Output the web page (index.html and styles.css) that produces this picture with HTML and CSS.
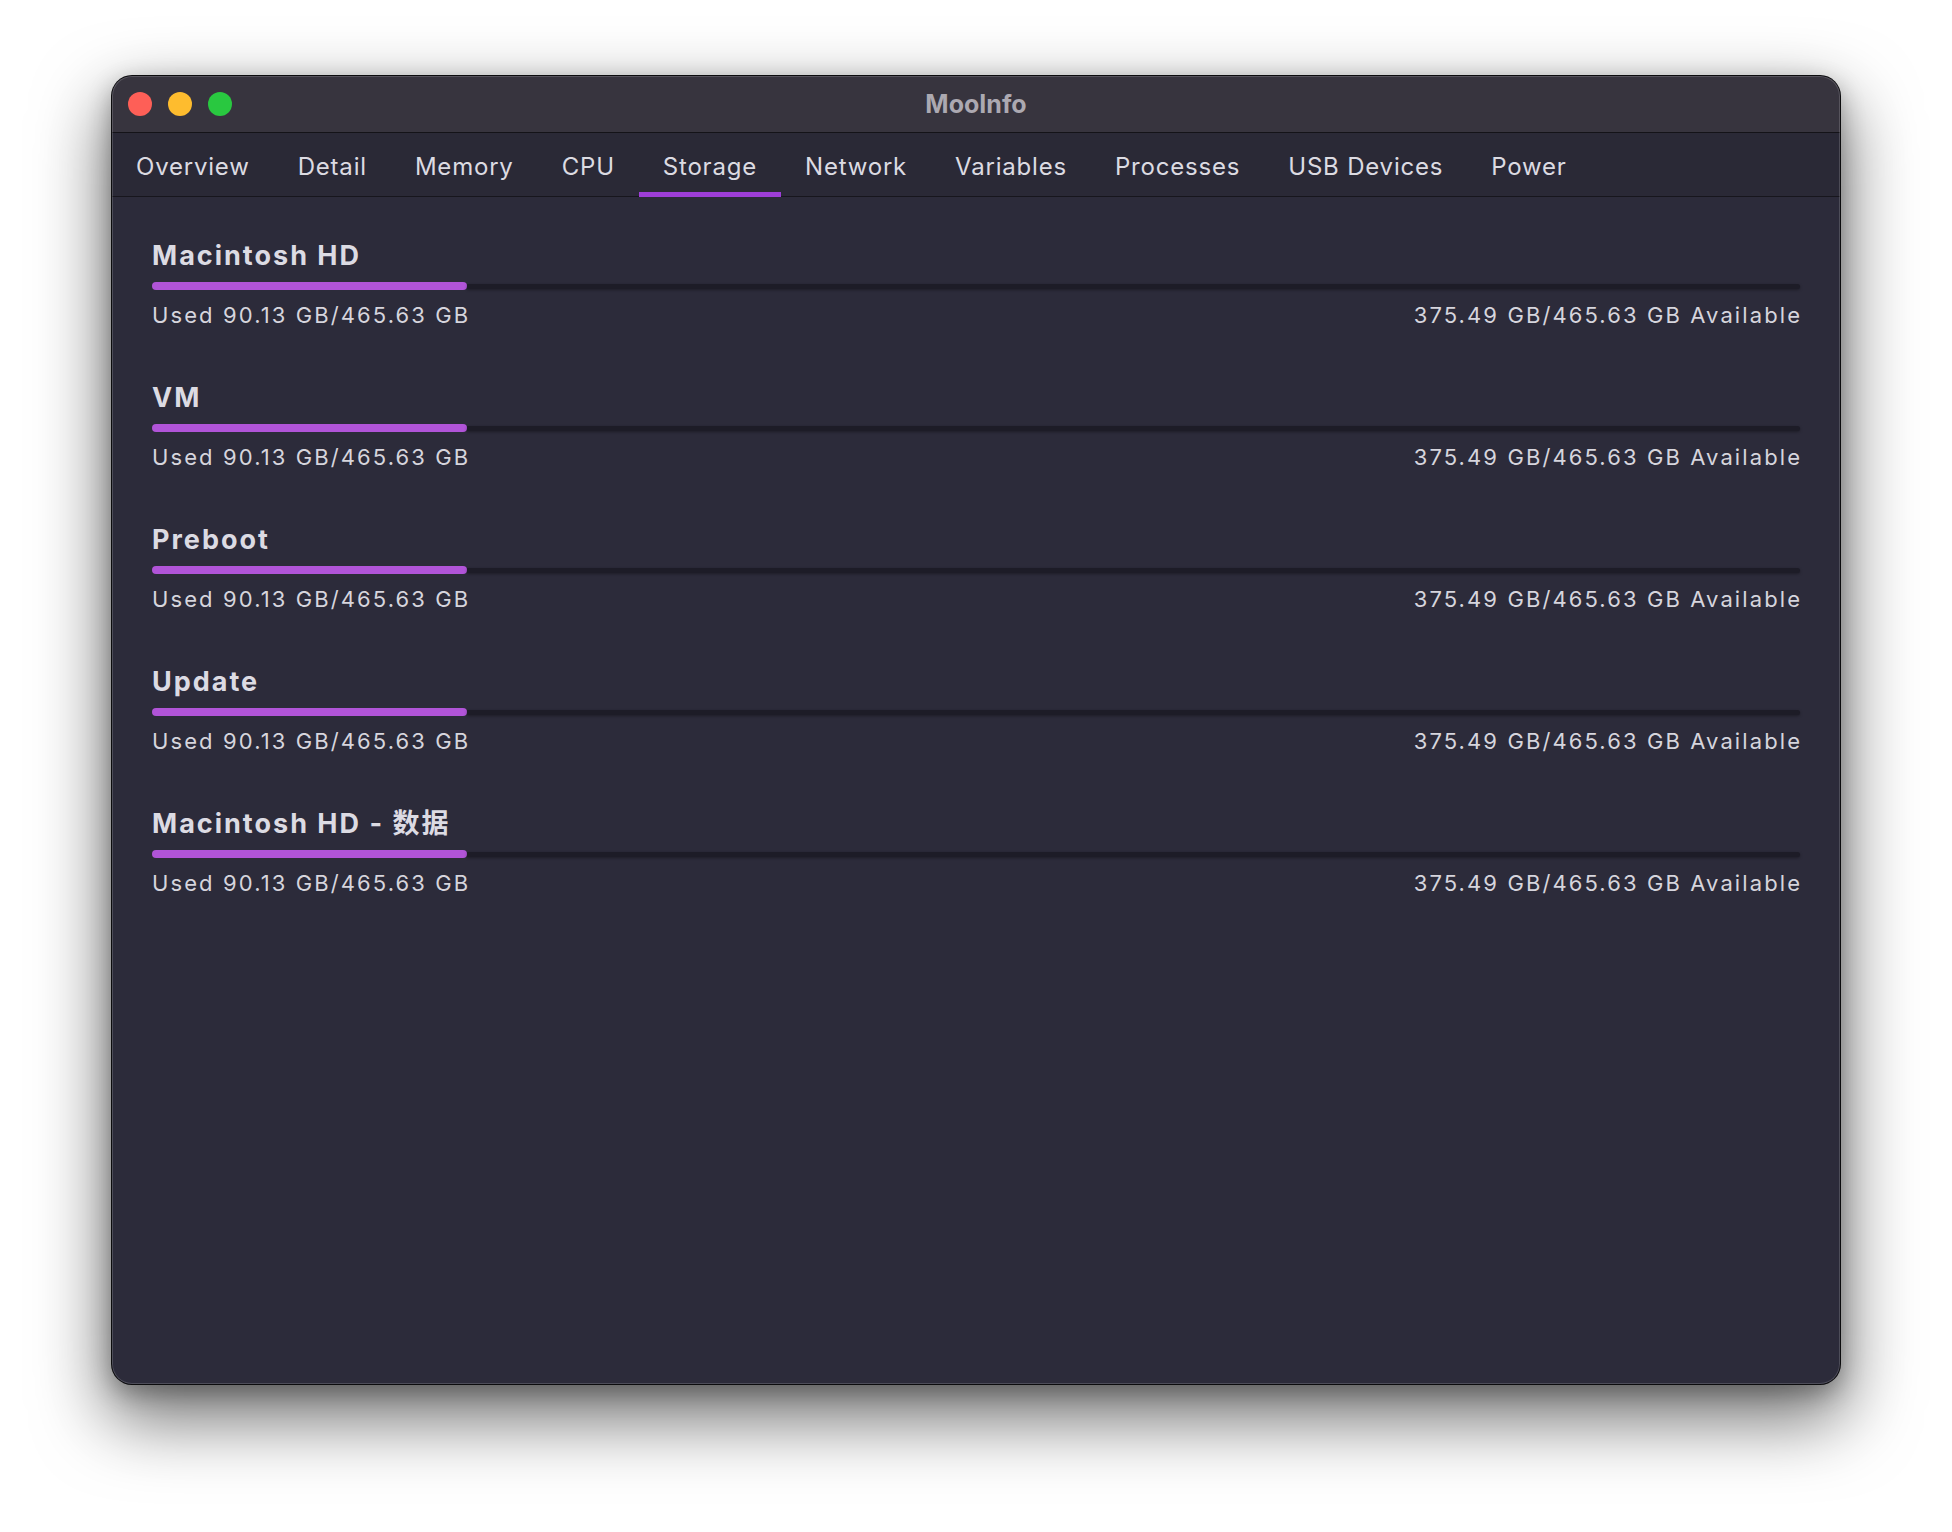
FILE: index.html
```html
<!DOCTYPE html>
<html lang="en">
<head>
<meta charset="utf-8">
<title>MooInfo</title>
<link rel="stylesheet" href="styles.css">
</head>
<body>
<div class="window">
  <header class="titlebar">
    <div class="lights">
      <span class="light red"></span>
      <span class="light yellow"></span>
      <span class="light green"></span>
    </div>
    <div class="title">MooInfo</div>
  </header>
  <nav class="tabs">
    <div class="tab">Overview</div>
    <div class="tab">Detail</div>
    <div class="tab">Memory</div>
    <div class="tab">CPU</div>
    <div class="tab active">Storage</div>
    <div class="tab">Network</div>
    <div class="tab">Variables</div>
    <div class="tab">Processes</div>
    <div class="tab">USB Devices</div>
    <div class="tab">Power</div>
  </nav>
  <main class="content">
    <section class="disk">
      <div class="disk-name">Macintosh HD</div>
      <div class="bar"><div class="fill" style="width:19.1%"></div><div class="track"></div></div>
      <div class="disk-info"><span>Used 90.13 GB/465.63 GB</span><span>375.49 GB/465.63 GB Available</span></div>
    </section>
    <section class="disk">
      <div class="disk-name">VM</div>
      <div class="bar"><div class="fill" style="width:19.1%"></div><div class="track"></div></div>
      <div class="disk-info"><span>Used 90.13 GB/465.63 GB</span><span>375.49 GB/465.63 GB Available</span></div>
    </section>
    <section class="disk">
      <div class="disk-name">Preboot</div>
      <div class="bar"><div class="fill" style="width:19.1%"></div><div class="track"></div></div>
      <div class="disk-info"><span>Used 90.13 GB/465.63 GB</span><span>375.49 GB/465.63 GB Available</span></div>
    </section>
    <section class="disk">
      <div class="disk-name">Update</div>
      <div class="bar"><div class="fill" style="width:19.1%"></div><div class="track"></div></div>
      <div class="disk-info"><span>Used 90.13 GB/465.63 GB</span><span>375.49 GB/465.63 GB Available</span></div>
    </section>
    <section class="disk">
      <div class="disk-name">Macintosh HD - 数据</div>
      <div class="bar"><div class="fill" style="width:19.1%"></div><div class="track"></div></div>
      <div class="disk-info"><span>Used 90.13 GB/465.63 GB</span><span>375.49 GB/465.63 GB Available</span></div>
    </section>
  </main>
</div>
</body>
</html>
```

FILE: styles.css
```css
* { box-sizing: border-box; }

html, body {
  margin: 0;
  padding: 0;
}

body {
  background: #ffffff;
  width: 1952px;
  height: 1532px;
  overflow: hidden;
  font-family: Inter, "Noto Sans CJK SC", "Liberation Sans", sans-serif;
  padding: 76px 0 0 112px;
}

.window {
  position: relative;
  width: 1728px;
  height: 1308px;
  border-radius: 20px;
  overflow: hidden;
  background: #2c2b3a;
  display: flex;
  flex-direction: column;
  box-shadow:
    0 0 0 1px #0c0c0e,
    0 30px 70px 6px rgba(0, 0, 0, 0.55),
    0 8px 24px rgba(0, 0, 0, 0.3);
}

.window::after {
  content: "";
  position: absolute;
  inset: 0;
  border-radius: 20px;
  box-shadow: inset 0 0 0 1px rgba(255, 255, 255, 0.16);
  pointer-events: none;
}

.titlebar {
  position: relative;
  height: 57px;
  flex: none;
  background: #37343e;
  border-bottom: 1px solid #141318;
  display: flex;
  align-items: center;
  padding-left: 16px;
}

.lights {
  display: flex;
  gap: 16px;
  margin-top: -1px;
}

.light {
  width: 24px;
  height: 24px;
  border-radius: 50%;
}

.red { background: #fe5f57; }
.yellow { background: #febc2e; }
.green { background: #29c840; }

.title {
  position: absolute;
  left: 0;
  right: 0;
  top: 0;
  height: 56px;
  display: flex;
  align-items: center;
  justify-content: center;
  color: #aca9b1;
  font-weight: 700;
  font-size: 25px;
  pointer-events: none;
}

.tabs {
  height: 64px;
  flex: none;
  background: #2a2936;
  border-bottom: 1px solid #17161d;
  display: flex;
  align-items: stretch;
}

.tab {
  position: relative;
  padding: 3px 24px 0 24px;
  display: flex;
  align-items: center;
  color: #dcdbe2;
  font-size: 24px;
  letter-spacing: 0.8px;
}

.tab.active::after {
  content: "";
  position: absolute;
  left: 0;
  right: 0;
  bottom: -1px;
  height: 5px;
  background: #9e3ed8;
}

.content {
  flex: 1;
  padding: 43px 40px 0 40px;
  display: flex;
  flex-direction: column;
  gap: 53px;
}

.disk {
  display: flex;
  flex-direction: column;
}

.disk-name {
  font-size: 27px;
  line-height: 32px;
  font-weight: 700;
  color: #dcdbe3;
  letter-spacing: 2px;
}

.bar {
  margin-top: 10px;
  height: 8px;
  display: flex;
  align-items: center;
}

.fill {
  height: 8px;
  background: #b154d8;
  border-radius: 4px;
  flex: none;
}

.track {
  flex: 1;
  height: 5px;
  background: #1d1c27;
  border-radius: 0 3px 3px 0;
  box-shadow: 0 1px 3px rgba(0, 0, 0, 0.35);
}

.disk-info {
  margin-top: 11px;
  display: flex;
  justify-content: space-between;
  font-size: 22px;
  line-height: 28px;
  color: #d6d5dd;
  letter-spacing: 2.1px;
}

.disk-info span:last-child {
  margin-right: -2.1px;
}
```
